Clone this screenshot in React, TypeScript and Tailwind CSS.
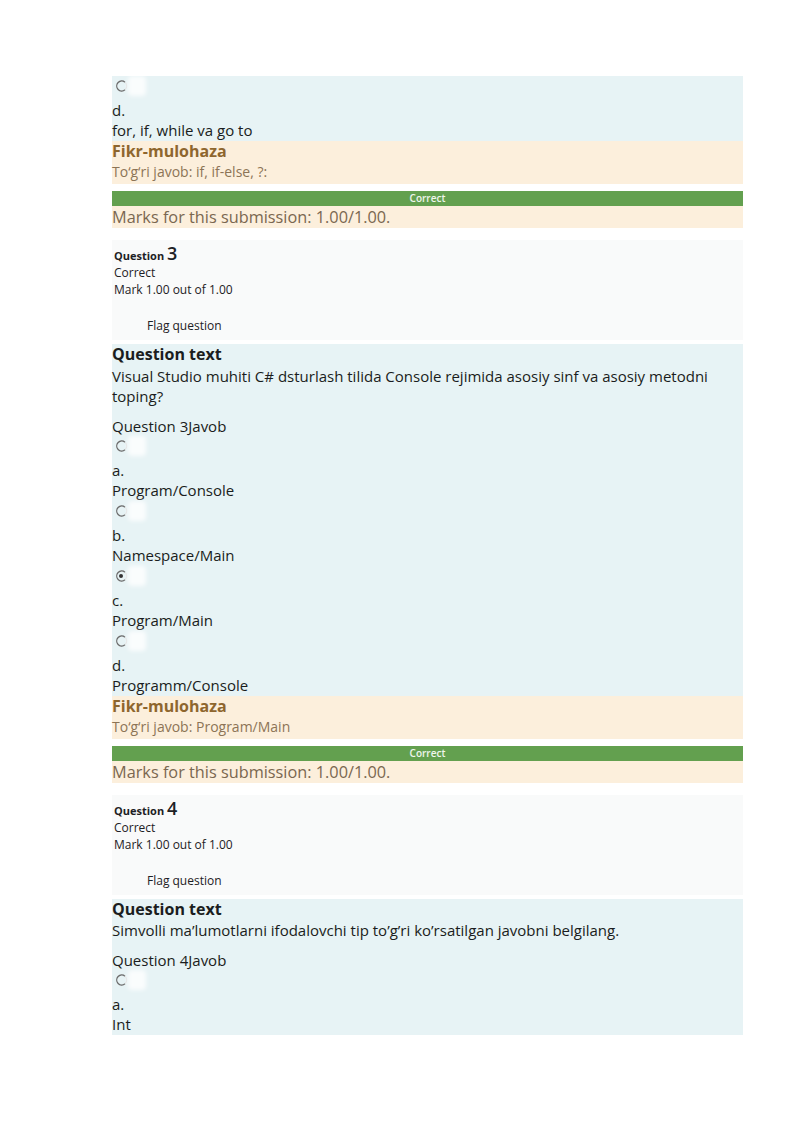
import React from 'react';

const font = { fontFamily: '"Open Sans", "Noto Sans", sans-serif' };

const Radio: React.FC<{ checked?: boolean }> = ({ checked }) => (
  <div className="h-[20px] flex items-center">
    <svg width="14" height="14" viewBox="0 0 14 14" className="ml-[2px]">
      <path d="M11 3.2 A5 5 0 1 0 11 10.8" fill="none" stroke="#6b6b6b" strokeWidth="1.3" />
      <path d="M11 3.2 A5 5 0 0 1 11 10.8" fill="none" stroke="#e2e2e2" strokeWidth="1.1" />
      {checked && <circle cx="7" cy="7" r="2" fill="#333" />}
    </svg>
    <div className="w-[18px] h-[20px] bg-white/80 rounded-sm blur-[2px]" />
  </div>
);

const Option: React.FC<{ letter: string; text: string; checked?: boolean }> = ({ letter, text, checked }) => (
  <div>
    <Radio checked={checked} />
    <div className="mt-[4px] leading-[20px]">{letter}</div>
    <div className="leading-[21px]">{text}</div>
  </div>
);

const Feedback: React.FC<{ answer: string }> = ({ answer }) => (
  <div>
    <div className="bg-[#fcefdc] pb-[2px]">
      <div className="text-[16px] font-bold leading-[20px] text-[#8e662e]">Fikr-mulohaza</div>
      <div className="text-[14px] leading-[21px] text-[#8c7456]">To‘g‘ri javob: {answer}</div>
    </div>
    <div className="mt-[7px] h-[15px] bg-[#63a04f] flex items-center justify-center text-[10px] font-semibold text-white/90">
      Correct
    </div>
    <div className="bg-[#fcefdc] text-[16.3px] leading-[22px] text-[#7a6750]">
      Marks for this submission: 1.00/1.00.
    </div>
  </div>
);

const Info: React.FC<{ num: number }> = ({ num }) => (
  <div className="bg-[#f9fafa] pt-[3px] pb-[6px] pl-[2px] text-[#1d2125]">
    <div className="h-[21px] leading-[21px]">
      <span className="text-[11px] font-bold">Question </span>
      <span className="text-[18px] font-semibold">{num}</span>
    </div>
    <div className="text-[12px] leading-[17px]">Correct</div>
    <div className="text-[12px] leading-[17px]">Mark 1.00 out of 1.00</div>
    <div className="mt-[19px] pl-[33px] text-[12px] leading-[17px]">Flag question</div>
  </div>
);

export default function App() {
  return (
    <div className="min-h-[1131px] bg-white pt-[76px]" style={font}>
      <div className="ml-[112px] w-[631px] text-[15px] text-[#1a1d20]">
        <div className="bg-[#e7f3f5]">
          <Option letter="d." text="for, if, while va go to" />
        </div>
        <Feedback answer="if, if-else, ?:" />

        <div className="mt-[12px]">
          <Info num={3} />
        </div>
        <div className="mt-[4px] bg-[#e7f3f5]">
          <div className="text-[16px] font-bold leading-[20px]">Question text</div>
          <div className="mt-[2px] leading-[20px] pr-[20px]">
            Visual Studio muhiti C# dsturlash tilida Console rejimida asosiy sinf va asosiy metodni toping?
          </div>
          <div className="mt-[10px] leading-[20px]">Question 3Javob</div>
          <Option letter="a." text="Program/Console" />
          <Option letter="b." text="Namespace/Main" />
          <Option letter="c." text="Program/Main" checked />
          <Option letter="d." text="Programm/Console" />
        </div>
        <Feedback answer="Program/Main" />

        <div className="mt-[12px]">
          <Info num={4} />
        </div>
        <div className="mt-[4px] bg-[#e7f3f5]">
          <div className="text-[16px] font-bold leading-[20px]">Question text</div>
          <div className="mt-[1px] leading-[20px]">
            Simvolli ma’lumotlarni ifodalovchi tip to’g’ri ko’rsatilgan javobni belgilang.
          </div>
          <div className="mt-[10px] leading-[20px]">Question 4Javob</div>
          <Option letter="a." text="Int" />
        </div>
      </div>
    </div>
  );
}
